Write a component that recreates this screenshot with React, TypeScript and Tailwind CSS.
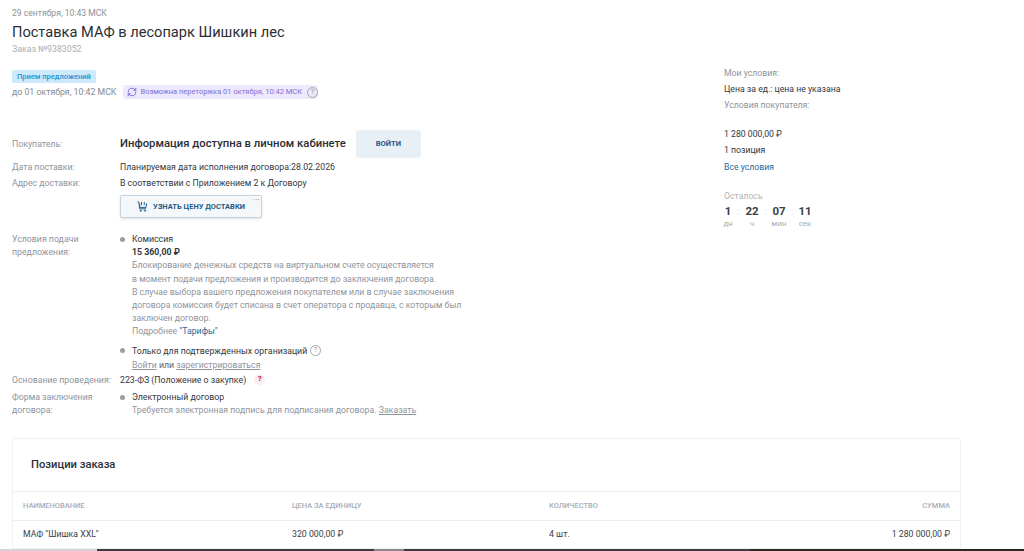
import React from "react";
import { RefreshCw } from "lucide-react";

const Label = ({ children }: { children: React.ReactNode }) => (
  <div className="w-[108px] shrink-0 text-[#8f949b] leading-[13px]">{children}</div>
);

const Dot = () => <span className="absolute left-0 top-[4px] w-[5px] h-[5px] rounded-full bg-[#9a9ea4]" />;

const Q = ({ cls }: { cls: string }) => (
  <span className={"inline-flex items-center justify-center w-[11px] h-[11px] rounded-full border border-[#a3a6ab] text-[7px] leading-none " + cls}>?</span>
);

const timer = [
  { v: "1", u: "дн", w: "w-[8px]", c: "" },
  { v: "22", u: "ч", w: "w-[16px]", c: "w-[12px]" },
  { v: "07", u: "мин", w: "w-[16px]", c: "w-[11px]" },
  { v: "11", u: "сек", w: "w-[16px]", c: "w-[10px]" },
];

export default function App() {
  return (
    <div className="relative h-[551px] w-[1024px] overflow-hidden bg-white font-['Roboto',sans-serif] text-[8.75px] text-[#33373d]">
      <div className="flex">
        <main className="w-[724px] shrink-0 pl-3">
          <div className="pt-[8px] text-[8.6px] leading-[11px] text-[#8b8f95]">29 сентября, 10:43 МСК</div>
          <h1 className="mt-[3px] text-[14.6px] leading-[20px] font-normal text-[#2b2e33]">Поставка МАФ в лесопарк Шишкин лес</h1>
          <div className="mt-[2px] text-[8.75px] leading-[11px] text-[#a9adb2]">Заказ №9383052</div>
          <div className="mt-[15px] w-fit rounded-[2px] bg-[#cdeafb] px-[5px] text-[7.5px] leading-[13px] font-medium text-[#1f93d6]">Прием предложений</div>
          <div className="mt-[2px] flex items-center">
            <span className="whitespace-nowrap leading-[14px] text-[#85898f]">до 01 октября, 10:42 МСК</span>
            <span className="ml-[7px] flex h-[14px] w-[195px] items-center whitespace-nowrap rounded-[3px] bg-[#ede8fb] pl-[4px] text-[7.5px] text-[#7f6fd6]">
              <RefreshCw size={10} strokeWidth={2} className="shrink-0 text-[#6b5bd0]" />
              <span className="ml-[3px]">Возможна переторжка 01 октября, 10:42 МСК</span>
              <Q cls="ml-[5px] shrink-0 text-[#8f9196]" />
            </span>
          </div>

          <div className="mt-[31px] flex items-center">
            <Label>Покупатель:</Label>
            <span className="whitespace-nowrap text-[11.3px] font-medium text-[#2b2e33]">Информация доступна в личном кабинете</span>
            <span className="ml-[10px] flex h-[28px] w-[65px] items-center justify-center rounded-[3px] bg-[#e8eff5] text-[7.6px] font-bold text-[#1c5a8a]">ВОЙТИ</span>
          </div>
          <div className="mt-[3px] flex leading-[13px]">
            <Label>Дата поставки:</Label>
            <span>Планируемая дата исполнения договора:28.02.2026</span>
          </div>
          <div className="mt-[3px] flex leading-[13px]">
            <Label>Адрес доставки:</Label>
            <span>В соответствии с Приложением 2 к Договору</span>
          </div>
          <div className="ml-[108px] mt-[5px] relative flex h-[23px] w-[142px] items-center justify-center rounded-[2px] border border-[#c5d3e0] bg-[#f5f8fb] text-[7.5px] font-bold text-[#235a85] shadow-sm">
            <svg width="10" height="11" viewBox="0 0 11 12" fill="none" stroke="#2a6590" strokeWidth="1.1" className="mr-[6px]">
              <path d="M0.5 1h1.5L3 8.5h7" />
              <path d="M3 2.5v4.5h7l.6-4.5" />
              <path d="M5 1v3.5M8 1v3.5" />
              <circle cx="4.2" cy="10.5" r="0.8" />
              <circle cx="8.8" cy="10.5" r="0.8" />
            </svg>
            УЗНАТЬ ЦЕНУ ДОСТАВКИ
            <span className="absolute right-[1px] top-[2px] text-[5px] leading-[5px] tracking-[0.5px] text-[#b4b8bd]">•••</span>
          </div>

          <div className="mt-[15px] flex">
            <Label>Условия подачи предложения:</Label>
            <div className="relative pl-[12px] leading-[13.2px]">
              <Dot />
              <div>Комиссия</div>
              <div className="font-bold">15 360,00 ₽</div>
              <div className="w-[345px] text-[#8f949b]">
                Блокирование денежных средств на виртуальном счете осуществляется<br />
                в момент подачи предложения и производится до заключения договора.<br />
                В случае выбора вашего предложения покупателем или в случае заключения<br />
                договора комиссия будет списана в счет оператора с продавца, с которым был<br />
                заключен договор.<br />
                Подробнее <span className="text-[#1f6a9c]">"Тарифы"</span>
              </div>
            </div>
          </div>
          <div className="ml-[108px] mt-[5px] relative pl-[12px] leading-[14px]">
            <Dot />
            <div className="flex items-center">Только для подтвержденных организаций<Q cls="ml-[3px] text-[#9a9ea4]" /></div>
            <div className="text-[#5f6368]"><span className="text-[#8f949b] underline">Войти</span> или <span className="text-[#8f949b] underline">зарегистрироваться</span></div>
          </div>
          <div className="mt-[2px] flex leading-[13px]">
            <Label>Основание проведения:</Label>
            <span>223-ФЗ (Положение о закупке)</span>
            <span className="ml-[8px] flex h-[11px] w-[11px] items-center justify-center rounded-full bg-[#fbeef1] text-[8px] font-bold leading-none text-[#c2214a]">?</span>
          </div>
          <div className="mt-[4px] flex">
            <Label>Форма заключения договора:</Label>
            <div className="relative pl-[12px] leading-[13px]">
              <Dot />
              <div>Электронный договор</div>
              <div className="text-[#8f949b]">Требуется электронная подпись для подписания договора. <span className="underline">Заказать</span></div>
            </div>
          </div>
        </main>

        <aside className="pt-[67px] text-[8.7px] leading-[13px]">
          <div className="text-[#8f949b]">Мои условия:</div>
          <div className="mt-[3px]">Цена за ед.: цена не указана</div>
          <div className="mt-[3px] text-[#8f949b]">Условия покупателя:</div>
          <div className="mt-[16px]">1 280 000,00 ₽</div>
          <div className="mt-[3px]">1 позиция</div>
          <div className="mt-[4px] text-[#1f6a9c]">Все условия</div>
          <div className="mt-[16px] text-[#b0b4b9]">Осталось</div>
          <div className="mt-[1px] flex">
            {timer.map(({ v, u, w, c }) => (
              <div key={u} className="flex">
                {c && <span className={c + " text-center text-[9px] leading-[17px] text-[#c4c7cb]"}>:</span>}
                <div className={w + " flex flex-col items-center"}>
                  <div className="text-[11.5px] font-bold leading-[15px] text-[#3a4148]">{v}</div>
                  <div className="text-[7.8px] leading-[10px] text-[#a8acb1]">{u}</div>
                </div>
              </div>
            ))}
          </div>
        </aside>
      </div>

      <section className="absolute left-[12px] top-[438px] w-[949px] rounded-[2px] border border-[#f0f1f3]">
        <div className="flex h-[53px] items-center border-b border-[#eceef0] pl-[18px] text-[11.2px] font-medium text-[#2b2e33]">Позиции заказа</div>
        <div className="flex h-[29px] items-center border-b border-[#eceef0] px-[10px] text-[7.5px] font-medium text-[#a6adb8]">
          <div className="w-[269px]">НАИМЕНОВАНИЕ</div>
          <div className="w-[257px]">ЦЕНА ЗА ЕДИНИЦУ</div>
          <div className="flex-1">КОЛИЧЕСТВО</div>
          <div>СУММА</div>
        </div>
        <div className="flex h-[27px] items-center px-[10px] text-[8.75px] text-[#3a3e44]">
          <div className="w-[269px]">МАФ "Шишка XXL"</div>
          <div className="w-[257px]">320 000,00 ₽</div>
          <div className="flex-1">4 шт.</div>
          <div>1 280 000,00 ₽</div>
        </div>
      </section>

      <div className="absolute bottom-0 left-0 right-0 flex h-[2px]">
        <div className="w-[97px] bg-[#d4d4d4]" />
        <div className="w-[277px] bg-[#3c3c3c]" />
        <div className="w-[30px] bg-[#8a8a8a]" />
        <div className="w-[346px] bg-[#3c3c3c]" />
        <div className="flex-1 bg-[#2a2622]" />
      </div>
    </div>
  );
}
